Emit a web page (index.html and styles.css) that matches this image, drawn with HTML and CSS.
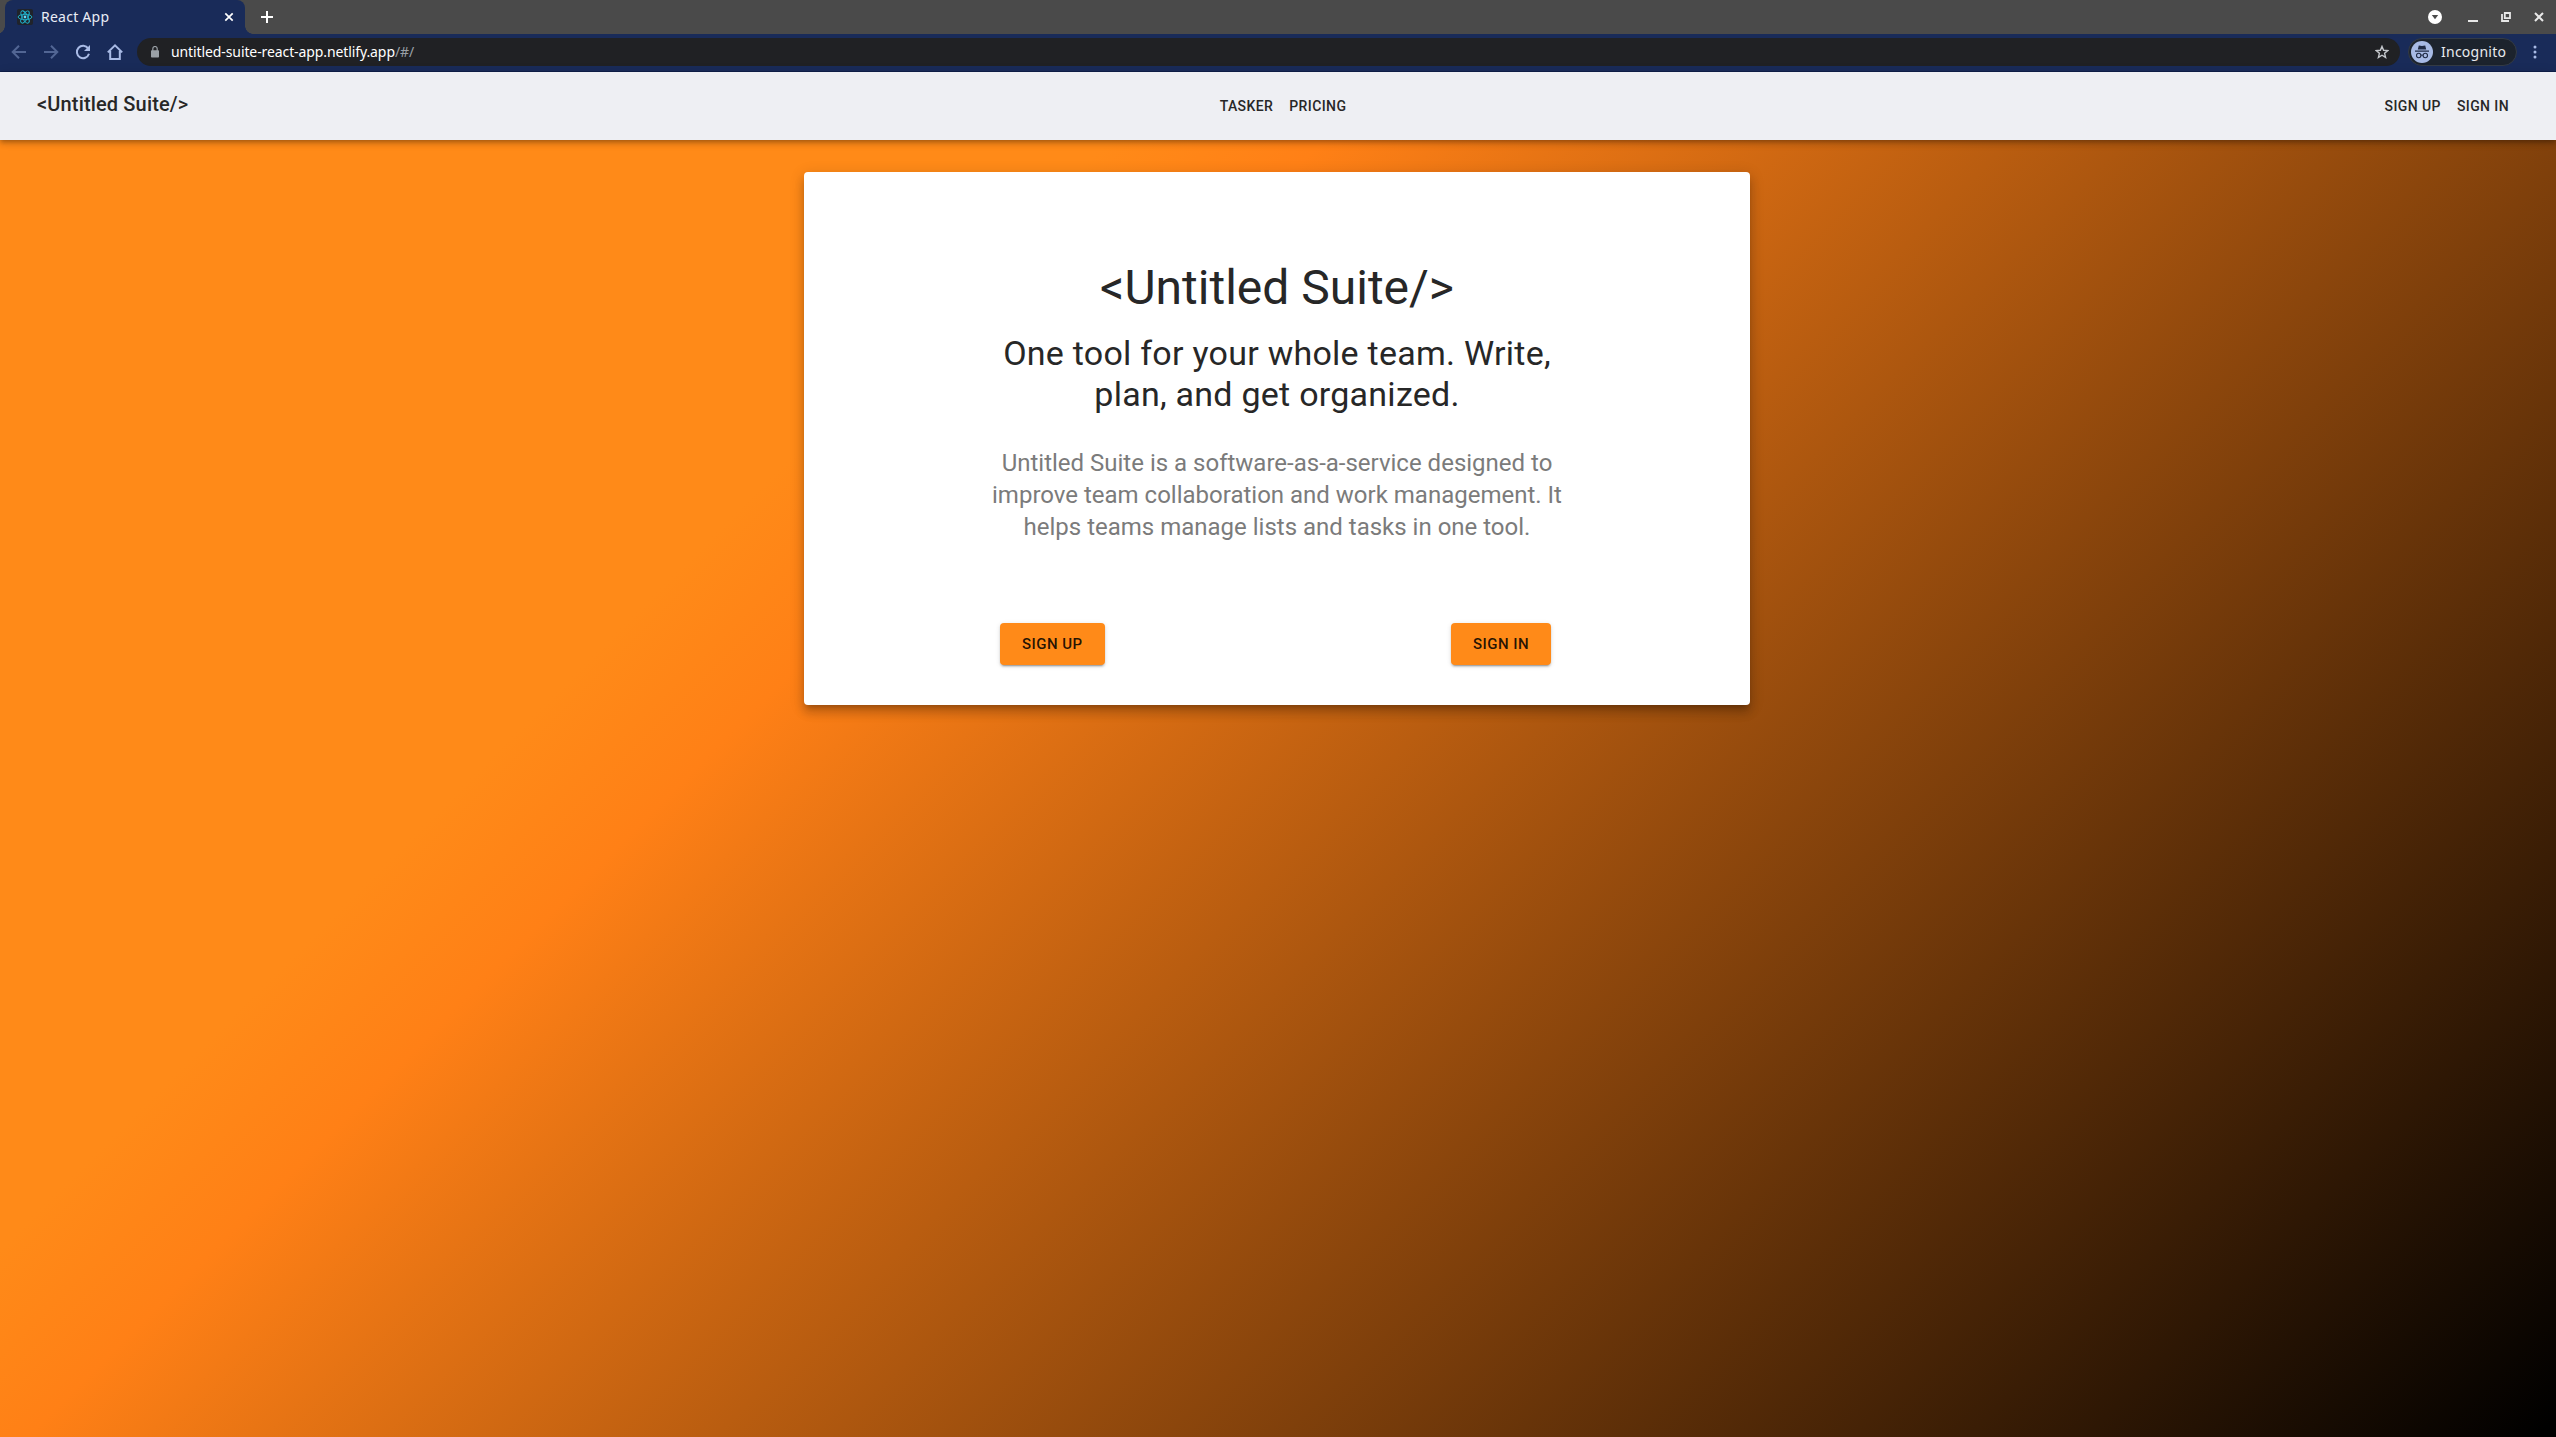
FILE: index.html
```html
<!DOCTYPE html>
<html lang="en">
<head>
<meta charset="utf-8">
<title>React App</title>
<link rel="stylesheet" href="styles.css">
</head>
<body>
<div class="tabstrip">
  <div class="tab">
    <svg class="favicon" width="16" height="16" viewBox="0 0 16 16"><rect width="16" height="16" rx="2" fill="#20232a"/><g fill="none" stroke="#1fb5d0" stroke-width=".9"><ellipse cx="8" cy="8" rx="6.9" ry="2.7"/><ellipse cx="8" cy="8" rx="6.9" ry="2.7" transform="rotate(60 8 8)"/><ellipse cx="8" cy="8" rx="6.9" ry="2.7" transform="rotate(120 8 8)"/></g><circle cx="8" cy="8" r="1.4" fill="#61dafb"/></svg>
    <span class="tab-title">React App</span>
    <svg class="tab-close" width="10" height="10" viewBox="0 0 10 10"><path d="M1.3 1.3l7.4 7.4M8.7 1.3L1.3 8.7" stroke="#fff" stroke-width="1.7"/></svg>
  </div>
  <svg class="new-tab" width="12" height="12" viewBox="0 0 12 12"><path d="M6 0v12M0 6h12" stroke="#fff" stroke-width="2"/></svg>
  <div class="window-controls">
    <svg width="14" height="14" viewBox="0 0 14 14"><circle cx="7" cy="7" r="7" fill="#fff"/><path d="M3.8 5h6.4L7 9.2z" fill="#4a4a4a"/></svg>
    <svg width="10" height="10" viewBox="0 0 10 10"><path d="M0 9h10" stroke="#e8e8e8" stroke-width="2"/></svg>
    <svg width="10" height="10" viewBox="0 0 10 10"><path d="M3.8 1h5.2v5.2H3.8zM1 2v7h7" fill="none" stroke="#e8e8e8" stroke-width="1.8"/></svg>
    <svg width="10" height="10" viewBox="0 0 10 10"><path d="M1 1l8 8M9 1L1 9" stroke="#e8e8e8" stroke-width="2"/></svg>
  </div>
</div>
<div class="toolbar">
  <svg class="nav-icon dim" viewBox="0 0 16 16"><path d="M15 8H2M8 1.7L1.7 8 8 14.3"/></svg>
  <svg class="nav-icon dim" viewBox="0 0 16 16"><path d="M1 8h13M8 1.7L14.3 8 8 14.3"/></svg>
  <svg class="nav-icon" viewBox="0 0 16 16"><path d="M13.2 4.4A6.2 6.2 0 1 0 14 9.8"/><path class="solid" d="M15 1v6H9z"/></svg>
  <svg class="nav-icon" viewBox="0 0 16 16"><path d="M.8 8.4L8 1.4l7.2 7M3.2 7v8h9.6V7"/></svg>
  <div class="omnibox">
    <svg width="8" height="12" viewBox="0 0 8 12"><rect y="4.2" width="8" height="7.3" rx=".8" fill="#9aa0a6"/><path d="M1.8 5V2.7a2.2 2.2 0 0 1 4.4 0V5" fill="none" stroke="#9aa0a6" stroke-width="1.2"/></svg>
    <span class="url">untitled-suite-react-app.netlify.app<span class="path">/#/</span></span>
    <svg class="star" width="14" height="14" viewBox="0 0 14 14"><path d="M7 1.4l1.6 3.9 4.2.3-3.2 2.7 1 4.1L7 10.2l-3.6 2.2 1-4.1L1.2 5.6l4.2-.3z" fill="none" stroke="#c4c7cc" stroke-width="1.4"/></svg>
  </div>
  <div class="incognito">
    <svg width="22" height="22" viewBox="0 0 22 22"><circle cx="11" cy="11" r="11" fill="#a7bae5"/><path d="M7.8 4.4l3.2.5 3.2-.5 1 4H6.8zM4 9.6h14v1.2H4z" fill="#202b45"/><g fill="none" stroke="#202b45" stroke-width="1.1"><circle cx="7.7" cy="14.5" r="2.2"/><circle cx="14.3" cy="14.5" r="2.2"/><path d="M9.9 14.4q1.1-.8 2.2 0"/></g></svg>
    <span>Incognito</span>
  </div>
  <svg class="kebab" width="4" height="14" viewBox="0 0 4 14"><g fill="#a9bbe6"><circle cx="2" cy="2" r="1.5"/><circle cx="2" cy="7" r="1.5"/><circle cx="2" cy="12" r="1.5"/></g></svg>
</div>
<div class="page">
  <header class="appbar">
    <a class="brand">&lt;Untitled Suite/&gt;</a>
    <nav class="links center"><a>TASKER</a><a>PRICING</a></nav>
    <nav class="links right"><a>SIGN UP</a><a>SIGN IN</a></nav>
  </header>
  <main class="card">
    <h1>&lt;Untitled Suite/&gt;</h1>
    <h2>One tool for your whole team. Write,<br>plan, and get organized.</h2>
    <p>Untitled Suite is a software-as-a-service designed to<br>improve team collaboration and work management. It<br>helps teams manage lists and tasks in one tool.</p>
    <div class="actions"><button>SIGN UP</button><button>SIGN IN</button></div>
  </main>
</div>
</body>
</html>
```
FILE: styles.css
```css
* { box-sizing: border-box; }
body { margin: 0; height: 1437px; overflow: hidden; display: flex; flex-direction: column; font-family: Roboto, sans-serif; color: #272727; }
svg { display: block; flex: none; }

.tabstrip { height: 34px; flex: none; display: flex; align-items: center; background: #4a4a4a; padding-left: 5px; font-family: "Noto Sans", sans-serif; }
.tab { position: relative; width: 240px; height: 34px; display: flex; align-items: center; padding: 0 11px 0 12px; background: #192b59; border-radius: 8px 8px 0 0; }
.tab::before, .tab::after { content: ""; position: absolute; bottom: 0; width: 8px; height: 8px; }
.tab::before { left: -8px; background: radial-gradient(circle at 0 0, transparent 7.5px, #192b59 8px); }
.tab::after { right: -8px; background: radial-gradient(circle at 100% 0, transparent 7.5px, #192b59 8px); }
.tab-title { margin-left: 8px; flex: 1; color: #e9edf6; font-size: 14px; letter-spacing: .25px; line-height: 34px; }
.new-tab { margin-left: 16px; }
.window-controls { margin-left: auto; margin-right: 12px; display: flex; align-items: center; gap: 23px; }
.window-controls svg:first-child { margin-right: 3px; }

.toolbar { height: 38px; flex: none; display: flex; align-items: center; padding: 0 19px 2px 11px; background: #192b59; border-bottom: 1px solid #10204a; font-family: "Noto Sans", sans-serif; }
.nav-icon { width: 16px; height: 16px; margin-right: 16px; fill: none; stroke: #a9bbe6; stroke-width: 2; }
.nav-icon.dim { stroke: #526694; }
.nav-icon .solid { fill: #a9bbe6; stroke: none; }
.omnibox { flex: 1; margin-left: -2px; height: 28px; border-radius: 14px; background: #202124; display: flex; align-items: center; padding: 0 11px 0 14px; color: #fff; }
.url { flex: 1; margin-left: 12px; font-size: 14px; letter-spacing: -.1px; line-height: 28px; }
.url .path { color: #9aa0a6; }
.incognito { width: 109px; height: 28px; margin-left: 8px; border: 1px solid #343b45; border-radius: 14px; background: #1c232d; color: #e8eaed; display: flex; align-items: center; gap: 8px; padding-left: 2px; font-size: 14px; letter-spacing: .25px; }
.kebab { margin-left: 16px; }

.page { flex: 1; display: flex; flex-direction: column; align-items: center; background: linear-gradient(135deg, #ff8a18 0%, #ff8a18 30%, #ff8016 35.5%, #000 99.5%); }
.appbar { width: 100%; height: 68px; flex: none; display: grid; grid-template-columns: 1fr auto 1fr; align-items: center; padding: 0 47px 0 37px; background: #eeeff3; box-shadow: 0 2px 4px -1px rgba(0,0,0,.2), 0 4px 5px rgba(0,0,0,.14), 0 1px 10px rgba(0,0,0,.12); }
.brand { font-size: 20px; font-weight: 500; letter-spacing: .15px; line-height: 32px; margin-top: -5px; }
.links { display: flex; gap: 16px; font-size: 14px; font-weight: 500; letter-spacing: .4px; line-height: 24px; }
.links.center { margin: 0 -10px 0 10px; }
.links.right { justify-self: end; }

.card { width: 946px; height: 533px; margin-top: 32px; margin-right: 2px; padding: 88px 0 0; background: #fff; border-radius: 4px; text-align: center; box-shadow: 0 5px 5px -3px rgba(0,0,0,.2), 0 8px 10px 1px rgba(0,0,0,.14), 0 3px 14px 2px rgba(0,0,0,.12); }
h1 { margin: 0 0 17px; font-size: 48px; font-weight: 400; line-height: 56px; }
h2 { margin: 0 0 32px; font-size: 34px; font-weight: 400; line-height: 41px; letter-spacing: .25px; }
p { margin: 0 0 80px; font-size: 24px; line-height: 32px; color: #7b7b7b; }
.actions { display: flex; justify-content: space-between; padding: 0 199px 0 196px; }
button { height: 42px; padding: 0 22px; border: 0; border-radius: 4px; background: #ff8a18; color: rgba(0,0,0,.87); font: 500 15px/26px Roboto, sans-serif; letter-spacing: .46px; box-shadow: 0 3px 1px -2px rgba(0,0,0,.2), 0 2px 2px rgba(0,0,0,.14), 0 1px 5px rgba(0,0,0,.12); }
```
